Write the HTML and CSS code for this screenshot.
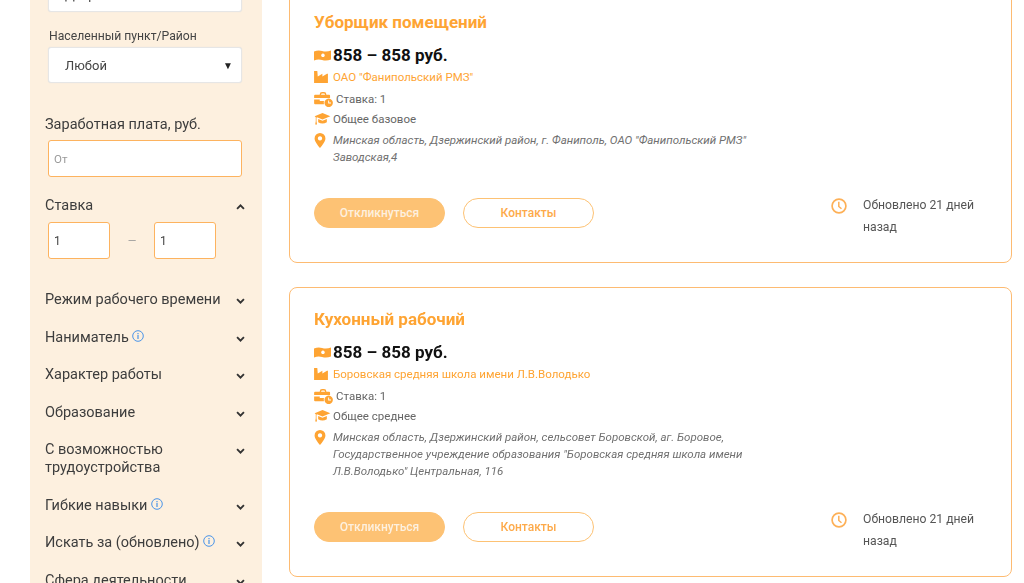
FILE: index.html
```html
<!DOCTYPE html>
<html lang="ru">
<head>
<meta charset="utf-8">
<title>Вакансии</title>
<link rel="stylesheet" href="styles.css">
</head>
<body>
<svg class="defs" width="0" height="0" aria-hidden="true">
  <symbol id="i-money" viewBox="0 0 19 12"><path fill-rule="evenodd" d="M0 1.500 Q5 -.5 9 1 Q14 2.500 19 .5 V10.500 Q14 12.500 9 11 Q5 9.500 0 11.500Z M10 3.800a2 2 0 1 0 .01 0Z"/></symbol>
  <symbol id="i-factory" viewBox="0 0 15 13"><path d="M0 0H3.500L4 6 9 3V6L14 3 15 3V13H0Z"/></symbol>
  <symbol id="i-case" viewBox="0 0 20 16"><path fill-rule="evenodd" d="M6 2.500Q6 0 8.500 0H10.500Q13 0 13 2.500V3H16Q17 3 17 4V6.500H0V4Q0 3 1 3H6ZM7.500 2.500V3H11.500V2.500Q11.500 1.500 10.500 1.500H8.500Q7.500 1.500 7.500 2.500ZM0 8H6V9.500H10.500Q10 11 10.500 13H1Q0 13 0 12Z"/><path fill-rule="evenodd" d="M15.500 7a4.500 4.500 0 1 0 .01 0ZM15 9H16V11.200H18V12.200H15Z"/></symbol>
  <symbol id="i-cap" viewBox="0 0 17 13"><path d="M8.500 0 17 3.500 8.500 7 2.500 4.600 2 5.200V9L2.600 12.500H.6L1.200 9V4.700L0 3.500Z"/><path d="M3.800 6.500 8.500 8.500 13.200 6.500V10Q8.500 13 3.800 10Z"/></symbol>
  <symbol id="i-pin" viewBox="0 0 12 16"><path fill-rule="evenodd" d="M6 0A5.800 5.800 0 0 0 .2 5.800C.2 9.500 6 16 6 16S11.800 9.500 11.800 5.800A5.800 5.800 0 0 0 6 0ZM6 3.500A2.300 2.300 0 1 1 5.990 3.500Z"/></symbol>
  <symbol id="i-clock" viewBox="0 0 16 16"><circle cx="8" cy="8" r="6.900" fill="none" stroke="currentColor" stroke-width="1.700"/><path d="M7.800 3.800V8.500L10.500 10.800" fill="none" stroke="currentColor" stroke-width="1.500"/></symbol>
  <symbol id="i-info" viewBox="0 0 12 12"><circle cx="6" cy="6" r="5.300" fill="none" stroke="currentColor"/><path d="M6 5V9M6 3V4.200" fill="none" stroke="currentColor" stroke-width="1.200"/></symbol>
  <symbol id="i-down" viewBox="0 0 10 7"><path d="M1 1.300 5 5.300 9 1.300" fill="none" stroke="currentColor" stroke-width="2.200"/></symbol>
  <symbol id="i-up" viewBox="0 0 10 7"><path d="M1 5.700 5 1.700 9 5.700" fill="none" stroke="currentColor" stroke-width="2.200"/></symbol>
</svg>
<div class="page">
  <aside class="sidebar">
    <div class="select first"><span class="select-text">Дзержинский</span></div>
    <div class="field-label">Населенный пункт/Район</div>
    <div class="select"><span class="select-text">Любой</span><span class="caret">▼</span></div>
    <div class="group-title salary-title">Заработная плата, руб.</div>
    <div class="input wide placeholder">От</div>
    <div class="acc open">
      <span class="acc-text">Ставка</span>
      <svg class="chev"><use href="#i-up"/></svg>
    </div>
    <div class="range">
      <div class="input small">1</div>
      <span class="dash">—</span>
      <div class="input small">1</div>
    </div>
    <div class="acc"><span class="acc-text">Режим рабочего времени</span><svg class="chev"><use href="#i-down"/></svg></div>
    <div class="acc"><span class="acc-text">Наниматель <svg class="info"><use href="#i-info"/></svg></span><svg class="chev"><use href="#i-down"/></svg></div>
    <div class="acc"><span class="acc-text">Характер работы</span><svg class="chev"><use href="#i-down"/></svg></div>
    <div class="acc"><span class="acc-text">Образование</span><svg class="chev"><use href="#i-down"/></svg></div>
    <div class="acc"><span class="acc-text">С возможностью трудоустройства</span><svg class="chev"><use href="#i-down"/></svg></div>
    <div class="acc"><span class="acc-text">Гибкие навыки <svg class="info"><use href="#i-info"/></svg></span><svg class="chev"><use href="#i-down"/></svg></div>
    <div class="acc"><span class="acc-text">Искать за (обновлено) <svg class="info"><use href="#i-info"/></svg></span><svg class="chev"><use href="#i-down"/></svg></div>
    <div class="acc"><span class="acc-text">Сфера деятельности</span><svg class="chev"><use href="#i-down"/></svg></div>
  </aside>
  <main class="list">
    <article class="card">
      <h2 class="title">Уборщик помещений</h2>
      <div class="salary"><svg class="ic ic-money"><use href="#i-money"/></svg>858 – 858 руб.</div>
      <div class="row company"><svg class="ic ic-factory"><use href="#i-factory"/></svg>ОАО "Фанипольский РМЗ"</div>
      <div class="row rate"><svg class="ic ic-case"><use href="#i-case"/></svg>Ставка: 1</div>
      <div class="row edu"><svg class="ic ic-cap"><use href="#i-cap"/></svg>Общее базовое</div>
      <div class="address"><svg class="ic ic-pin"><use href="#i-pin"/></svg><span class="address-text">Минская область, Дзержинский район, г. Фаниполь, ОАО "Фанипольский РМЗ" Заводская,4</span></div>
      <div class="foot">
        <button class="btn btn-fill">Откликнуться</button>
        <button class="btn btn-line">Контакты</button>
        <div class="updated"><svg class="ic-clock"><use href="#i-clock"/></svg><span class="updated-text">Обновлено 21 дней назад</span></div>
      </div>
    </article>
    <article class="card">
      <h2 class="title">Кухонный рабочий</h2>
      <div class="salary"><svg class="ic ic-money"><use href="#i-money"/></svg>858 – 858 руб.</div>
      <div class="row company"><svg class="ic ic-factory"><use href="#i-factory"/></svg>Боровская средняя школа имени Л.В.Володько</div>
      <div class="row rate"><svg class="ic ic-case"><use href="#i-case"/></svg>Ставка: 1</div>
      <div class="row edu"><svg class="ic ic-cap"><use href="#i-cap"/></svg>Общее среднее</div>
      <div class="address"><svg class="ic ic-pin"><use href="#i-pin"/></svg><span class="address-text">Минская область, Дзержинский район, сельсовет Боровской, аг. Боровое, Государственное учреждение образования "Боровская средняя школа имени Л.В.Володько" Центральная, 116</span></div>
      <div class="foot">
        <button class="btn btn-fill">Откликнуться</button>
        <button class="btn btn-line">Контакты</button>
        <div class="updated"><svg class="ic-clock"><use href="#i-clock"/></svg><span class="updated-text">Обновлено 21 дней назад</span></div>
      </div>
    </article>
  </main>
</div>
</body>
</html>
```
FILE: styles.css
```css
* { box-sizing: border-box; }
html, body { margin: 0; height: 583px; overflow: hidden; background: #fff; }
body { font-family: Roboto, "Noto Sans", sans-serif; color: #3d3d3d; }
.defs { position: absolute; }
.page { display: flex; align-items: flex-start; margin-top: -10px; padding-left: 30px; filter: blur(.35px); }

.sidebar { width: 232px; flex: none; background: #fdf0df; padding: 0 19px 40px 15px; }
.select { height: 36px; margin-left: 3px; width: 194px; background: #fff; border: 1px solid #e6e6e6; border-radius: 3px; display: flex; align-items: center; padding: 0 8px 0 16px; font-size: 13px; color: #444; box-shadow: 0 0 1px #ddd; }
.select.first { margin-top: -14px; overflow: hidden; }
.select-text { flex: 1; }
.caret { font-size: 10px; color: #222; }
.field-label { margin: 15px 0 2px 4px; font-size: 12.200px; line-height: 18px; color: #444; }
.group-title { font-size: 14.500px; line-height: 18px; }
.salary-title { margin-top: 33px; }
.input { border: 1px solid #fdb35f; border-radius: 3px; background: #fff; height: 37px; display: flex; align-items: center; padding-left: 5px; font-size: 12px; color: #444; margin-left: 3px; }
.input.wide { width: 194px; margin-top: 6px; }
.placeholder { color: #9a9a9a; font-size: 11.500px; }
.input.small { width: 62px; }
.range { display: flex; align-items: center; margin: 0 0 32px; }
.dash { width: 44px; text-align: center; color: #999; font-size: 11px; }
.range .input.small:last-child { margin-left: 0; }
.acc { display: flex; justify-content: space-between; align-items: flex-start; font-size: 14.500px; line-height: 18px; margin-bottom: 19.500px; }
.acc.open { margin: 20px 0 7px; }
.acc-text { width: 180px; }
.chev { width: 9px; height: 6px; margin-top: 7px; color: #333; flex: none; margin-right: -2px; }
.info { width: 12px; height: 12px; color: #4a94e8; vertical-align: 0; margin-left: 0; }

.list { margin-left: 27px; width: 723px; flex: none; display: flex; flex-direction: column; gap: 24px; }
.card { border: 1px solid #fdbb72; border-radius: 8px; padding: 21px 24px 24px; background: #fff; }
.title { margin: 0 0 11px; font-size: 17px; line-height: 20px; font-weight: 700; color: #fea433; }
.salary { display: flex; align-items: center; font-size: 17px; line-height: 24px; font-weight: 700; color: #111; }
.row { display: flex; align-items: center; font-size: 11.500px; line-height: 20px; color: #666; }
.company { color: #fea433; }
.rate { margin-top: 2px; }
.ic { fill: #fea433; color: #fea433; flex: none; }
.ic-money { width: 17px; height: 11px; margin-right: 2px; }
.ic-factory { width: 14px; height: 12px; margin-right: 5px; }
.ic-case { width: 19px; height: 15px; margin-right: 3px; }
.ic-cap { width: 17px; height: 12px; margin-right: 2px; }
.ic-pin { width: 12px; height: 15px; margin: 1px 7px 0 0; }
.address { display: flex; align-items: flex-start; font-size: 11.500px; line-height: 17px; color: #707070; font-style: italic; margin-top: 3px; }
.address-text { width: 420px; }
.foot { display: flex; align-items: flex-start; margin-top: 32px; }
.btn { flex: none; width: 131px; height: 30px; border-radius: 15px; font: 500 12px Roboto, sans-serif; border: 1px solid #fdc274; margin-right: 18px; padding: 0; }
.btn-fill { background: #fdc274; color: #fdf0df; }
.btn-line { background: #fff; color: #fdaa4a; }
.updated { display: flex; align-items: flex-start; margin-left: 219px; }
.ic-clock { width: 16px; height: 16px; color: #fdb057; margin-right: 16px; flex: none; }
.updated-text { width: 124px; font-size: 12.200px; line-height: 21.500px; color: #555; margin-top: -3px; }
```
